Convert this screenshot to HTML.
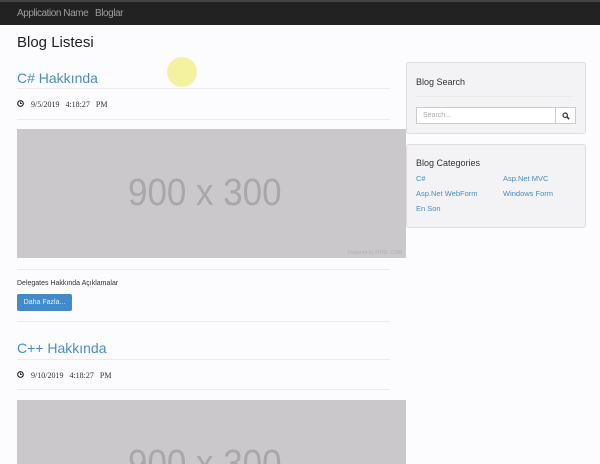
<!DOCTYPE html>
<html><head><style>
*{margin:0;padding:0;box-sizing:border-box}
html,body{overflow:hidden}
body{width:600px;height:464px;background:#fcfbfd;font-family:"Liberation Sans",sans-serif;position:relative;color:#333}
.a{position:absolute}
.nav{left:0;top:0;width:600px;height:25px;background:#222;border-top:2px solid #444}
.nav span{position:absolute;top:6px;color:#9d9d9d;font-size:10px;letter-spacing:-0.45px}
.h{color:#4b8cc0;font-size:14px}
.hr{height:1px;background:#eceaee}
.date{font-family:"Liberation Serif",serif;font-size:8px;color:#333}
.img{background:#cac8cb;color:#a9a7aa;font-size:38px;overflow:hidden}
.img b{font-weight:normal;position:absolute;left:111px;transform:scaleX(0.92);transform-origin:0 0}
.panel{background:#f3f2f4;border:1px solid #dedce0;border-radius:3px}
.lnk{color:#4b8cc0;font-size:7.5px;position:absolute}
</style></head><body>
<div class="a nav"><span style="left:17px">Application Name</span><span style="left:95px">Bloglar</span></div>
<div class="a" style="left:17px;top:34px;font-size:15px;color:#222">Blog Listesi</div>
<div class="a" style="left:167px;top:57px;width:30px;height:30px;border-radius:50%;background:#f4f2a0"></div>
<div class="a h" style="left:17px;top:70px">C# Hakkında</div>
<div class="a hr" style="left:17px;top:88px;width:373px"></div>
<svg class="a" style="left:17px;top:100px" width="7" height="7" viewBox="0 0 8 8"><circle cx="4" cy="4" r="3.2" fill="none" stroke="#222" stroke-width="1.3"/><path d="M4 2v2h1.6" fill="none" stroke="#222" stroke-width="1"/></svg>
<div class="a date" style="left:31px;top:100px">9/5/2019 &nbsp; 4:18:27 &nbsp; PM</div>
<div class="a hr" style="left:17px;top:119px;width:373px"></div>
<div class="a img" style="left:17px;top:129px;width:389px;height:129px;line-height:129px"><b>900 x 300</b><span style="position:absolute;right:4px;bottom:2px;font-size:5px;line-height:6px;color:#b2b0b3">Powered by HTML.COM</span></div>
<div class="a hr" style="left:17px;top:269px;width:373px"></div>
<div class="a" style="left:17px;top:280px;font-size:7px">Delegates Hakkında Açıklamalar</div>
<div class="a" style="left:17px;top:294px;width:55px;height:17px;background:#428bca;border-radius:2px;color:#e8f0f8;font-size:7px;line-height:17px;text-align:center">Daha Fazla...</div>
<div class="a hr" style="left:17px;top:321px;width:373px"></div>
<div class="a h" style="left:17px;top:340px">C++ Hakkında</div>
<div class="a hr" style="left:17px;top:359px;width:373px"></div>
<svg class="a" style="left:17px;top:371px" width="7" height="7" viewBox="0 0 8 8"><circle cx="4" cy="4" r="3.2" fill="none" stroke="#222" stroke-width="1.3"/><path d="M4 2v2h1.6" fill="none" stroke="#222" stroke-width="1"/></svg>
<div class="a date" style="left:31px;top:371px">9/10/2019 &nbsp; 4:18:27 &nbsp; PM</div>
<div class="a hr" style="left:17px;top:389px;width:373px"></div>
<div class="a img" style="left:17px;top:400px;width:389px;height:64px;line-height:129px"><b>900 x 300</b></div>
<div class="a panel" style="left:406px;top:62px;width:180px;height:72px"></div>
<div class="a" style="left:416px;top:77px;font-size:9px;color:#333">Blog Search</div>
<div class="a hr" style="left:416px;top:96px;width:158px"></div>
<div class="a" style="left:416px;top:107px;width:140px;height:17px;background:#fff;border:1px solid #ccc;font-size:7px;color:#aaa;padding:4px 6px">Search...</div>
<div class="a" style="left:555px;top:107px;width:21px;height:17px;background:#fff;border:1px solid #ccc"><svg style="position:absolute;left:6px;top:4px" width="8" height="8" viewBox="0 0 8 8"><circle cx="3.2" cy="3.2" r="2.2" fill="none" stroke="#333" stroke-width="1.2"/><path d="M4.8 4.8L7.2 7.2" stroke="#333" stroke-width="1.5"/></svg></div>
<div class="a panel" style="left:406px;top:144px;width:180px;height:84px"></div>
<div class="a" style="left:416px;top:158px;font-size:9px;color:#333">Blog Categories</div>
<div class="lnk" style="left:416px;top:174px">C#</div>
<div class="lnk" style="left:503px;top:174px">Asp.Net MVC</div>
<div class="lnk" style="left:416px;top:189px">Asp.Net WebForm</div>
<div class="lnk" style="left:503px;top:189px">Windows Form</div>
<div class="lnk" style="left:416px;top:204px">En Son</div>
</body></html>
